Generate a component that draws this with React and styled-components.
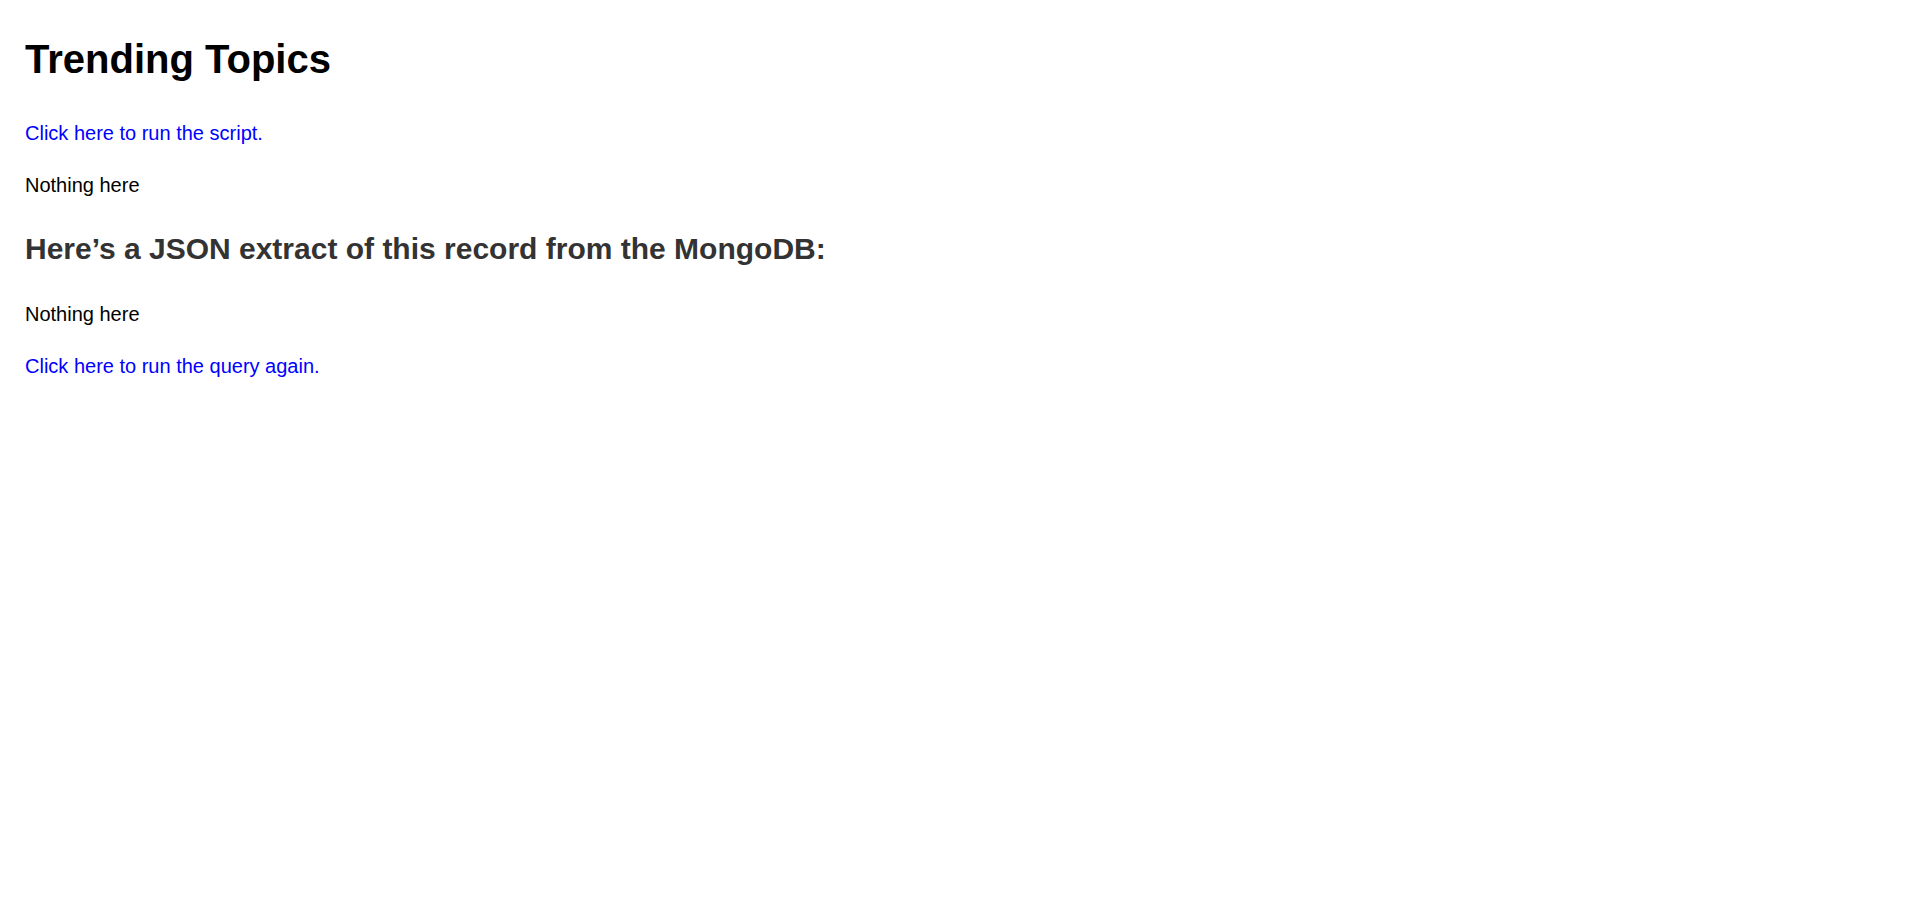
import React from "react"
import styled, { createGlobalStyle } from "styled-components"

const GlobalStyle = createGlobalStyle`
  body {
    margin: 0;
    background: #fff;
    font-family: "Liberation Sans", Arial, sans-serif;
    color: #000;
  }
`

const Main = styled.main`
  padding: 0 25px;
`

const Title = styled.h1`
  margin: 35px 0 34px;
  font-size: 40px;
  line-height: 48px;
  font-weight: bold;
  color: #000;
`

const Text = styled.p`
  margin: 20px 0;
  font-size: 20px;
  line-height: 32px;
`

const RunLink = styled.a`
  color: #0000ff;
  text-decoration: none;
  cursor: pointer;
`

const SubTitle = styled.h2`
  margin: 30px 0 31px;
  font-size: 30px;
  line-height: 36px;
  font-weight: bold;
  color: #333;
`

const App = () => (
  <Main>
    <GlobalStyle />
    <Title>Trending Topics</Title>
    <Text>
      <RunLink href="#">Click here to run the script.</RunLink>
    </Text>
    <Text>Nothing here</Text>
    <SubTitle>Here’s a JSON extract of this record from the MongoDB:</SubTitle>
    <Text>Nothing here</Text>
    <Text>
      <RunLink href="#">Click here to run the query again.</RunLink>
    </Text>
  </Main>
)

export default App
